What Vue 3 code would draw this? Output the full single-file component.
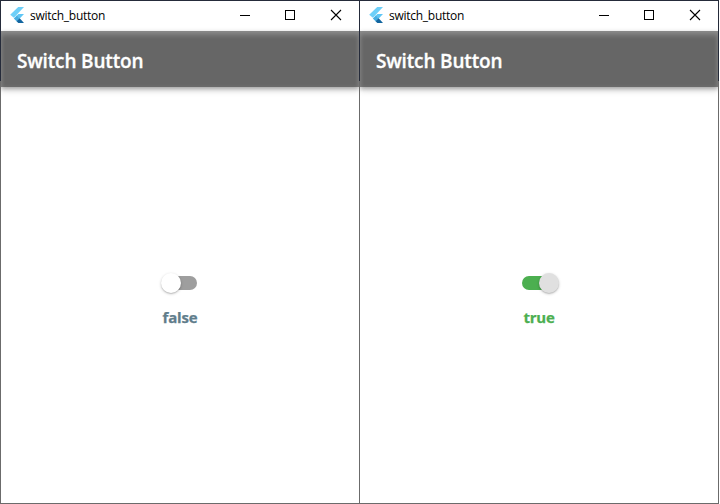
<script setup>
const panes = [
  { id: 'off', on: false },
  { id: 'on', on: true },
]
</script>

<template>
  <main class="desktop">
    <section v-for="pane in panes" :key="pane.id" class="window">
      <header class="titlebar">
        <svg class="logo" width="16" height="16" viewBox="0 0 16 16">
          <path d="M8.2 0H14L3.9 10.8L0.2 7.8Z" fill="#6dcff8" />
          <path d="M8.4 7H14L9.8 11.6L6.4 8.9Z" fill="#5fc6f5" />
          <path d="M3.8 11.6L6.8 8.6L9.9 11.4L6.8 14.4Z" fill="#45aee2" />
          <path d="M6.6 14.2L9.7 11.2L14 15.9H8.3Z" fill="#12659f" />
        </svg>
        <span class="caption">switch_button</span>
        <div class="controls">
          <svg width="46" height="29" shape-rendering="crispEdges">
            <rect x="18" y="14" width="10" height="1" />
          </svg>
          <svg width="45" height="29" shape-rendering="crispEdges">
            <rect x="17.5" y="9.5" width="9" height="9" fill="none" stroke="#000" />
          </svg>
          <svg width="46" height="29">
            <path d="M18 9L28 19M28 9L18 19" fill="none" stroke="#000" stroke-width="1.1" />
          </svg>
        </div>
      </header>
      <div class="appbar"><h1>Switch Button</h1></div>
      <div class="content">
        <div class="switch" :class="{ on: pane.on }"><i class="thumb"></i></div>
        <div class="value" :class="{ on: pane.on }">{{ pane.on }}</div>
      </div>
    </section>
    <div class="edge"></div>
  </main>
</template>

<style>
body {
  background: #fff;
}
</style>

<style scoped>
.desktop {
  display: flex;
  box-sizing: border-box;
  width: 719px;
  height: 504px;
  background: linear-gradient(#252b3a 81px, #6b6b6b 81px);
  padding: 1px 0;
  overflow: hidden;
  font-family: "Open Sans", "Noto Sans", sans-serif;
}
.window {
  width: 358px;
  height: 502px;
  margin-left: 1px;
  background: #fff;
  display: flex;
  flex-direction: column;
  overflow: hidden;
}
.edge {
  width: 1px;
}
.titlebar {
  height: 30px;
  flex: none;
  display: flex;
  align-items: center;
  padding-left: 9px;
}
.logo {
  margin-top: -2px;
  flex: none;
}
.caption {
  margin-left: 4px;
  font-size: 12px;
  line-height: 16px;
  letter-spacing: -0.26px;
  color: #000;
}
.controls {
  display: flex;
  margin-left: auto;
  height: 29px;
  align-self: flex-start;
}
.appbar {
  height: 56px;
  flex: none;
  box-sizing: border-box;
  padding-left: 16px;
  display: flex;
  align-items: center;
  background: #666;
  box-shadow: 0 2px 4px rgba(0, 0, 0, 0.25), 0 3px 7px rgba(0, 0, 0, 0.16),
    inset 0 4px 5px rgba(255, 255, 255, 0.22), inset 0 0 4px rgba(255, 255, 255, 0.08);
}
h1 {
  margin: 0;
  font-size: 19px;
  line-height: 28px;
  font-weight: 600;
  letter-spacing: -0.16px;
  -webkit-text-stroke: 0.3px #fff;
  color: #fff;
  padding-top: 4px;
}
.content {
  flex: 1;
  display: flex;
  flex-direction: column;
  align-items: center;
  padding-top: 189px;
}
.switch {
  width: 34px;
  height: 14px;
  border-radius: 7px;
  background: #9e9e9e;
  display: flex;
  align-items: center;
}
.switch.on {
  background: #4caf50;
  justify-content: flex-end;
}
.thumb {
  flex: none;
  width: 20px;
  height: 20px;
  margin: 0 -2.5px;
  border-radius: 50%;
  background: #fff;
  box-shadow: 0 1px 3px rgba(0, 0, 0, 0.22), 0 1px 1px rgba(0, 0, 0, 0.12);
}
.on .thumb {
  background: #e0e0e0;
}
.value {
  margin-top: 17px;
  font-size: 15px;
  line-height: 20px;
  font-weight: 700;
  letter-spacing: -0.2px;
  -webkit-text-stroke: 0.25px currentColor;
  color: #607d8b;
}
.value.on {
  color: #4caf50;
}
</style>
